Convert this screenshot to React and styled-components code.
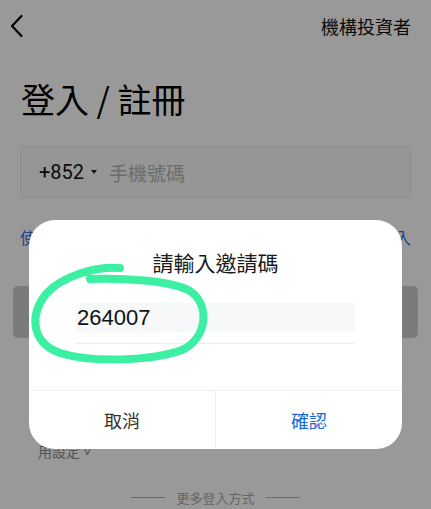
import React from 'react';
import styled, { createGlobalStyle } from 'styled-components';

const GlobalStyle = createGlobalStyle`
  html, body {
    margin: 0;
    padding: 0;
    background: #ffffff;
  }
  body {
    font-family: "Liberation Sans", "Noto Sans CJK TC", sans-serif;
    -webkit-font-smoothing: antialiased;
  }
`;

const Screen = styled.div`
  position: relative;
  width: 431px;
  height: 509px;
  overflow: hidden;
  background: #ffffff;
`;

const Header = styled.div`
  display: flex;
  align-items: center;
  justify-content: space-between;
  height: 52px;
  padding: 0 20px 0 9px;
`;

const BackIcon = styled.svg`
  width: 16px;
  height: 24px;
  display: block;
`;

const HeaderLink = styled.span`
  font-family: "Noto Sans CJK TC", sans-serif;
  font-size: 18px;
  color: #111;
  line-height: 1;
`;

const Title = styled.h1`
  margin: 24px 0 0 21px;
  font-family: "Noto Sans CJK TC", sans-serif;
  font-weight: 400;
  font-size: 34px;
  line-height: 46px;
  color: #000;
  white-space: pre;
`;

const PhoneBox = styled.div`
  display: flex;
  align-items: center;
  margin: 24px 20px 0 20px;
  height: 50px;
  border: 1px solid #e9e9e9;
  border-radius: 4px;
  background: #fbfbfb;
  padding-left: 18px;
`;

const AreaCode = styled.span`
  font-family: Roboto, "Liberation Sans", sans-serif;
  font-size: 20px;
  color: #111;
`;

const Caret = styled.span`
  width: 0;
  height: 0;
  margin: 0 12px 0 7px;
  border-left: 3px solid transparent;
  border-right: 3px solid transparent;
  border-top: 4px solid #222;
`;

const Placeholder = styled.span`
  font-family: "Noto Sans CJK TC", sans-serif;
  font-size: 19px;
  color: #b4b4b4;
`;

const LinkRow = styled.div`
  display: flex;
  justify-content: space-between;
  margin: 28px 20px 0 20px;
  font-family: "Noto Sans CJK TC", sans-serif;
  font-size: 16px;
  line-height: 22px;
  color: #3374e6;
`;

const SubmitButton = styled.div`
  margin: 38px 13px 0 13px;
  height: 52px;
  border-radius: 5px;
  background: #cdcdcd;
`;

const Agreement = styled.div`
  margin: 80px 0 0 38px;
  font-family: "Noto Sans CJK TC", sans-serif;
  font-size: 14px;
  line-height: 22px;
  color: #8e8e8e;
`;

const MoreLogin = styled.div`
  display: flex;
  align-items: center;
  justify-content: center;
  gap: 11px;
  margin-top: 26px;
  font-family: "Noto Sans CJK TC", sans-serif;
  font-size: 13px;
  line-height: 19px;
  color: #aaaaaa;
  &::before,
  &::after {
    content: "";
    width: 34px;
    height: 1px;
    background: #b5b5b5;
  }
`;

const Dim = styled.div`
  position: absolute;
  inset: 0;
  background: rgba(0, 0, 0, 0.4);
`;

const Dialog = styled.div`
  position: absolute;
  left: 29px;
  top: 220px;
  width: 373px;
  display: flex;
  flex-direction: column;
  background: #ffffff;
  border-radius: 26px;
  overflow: hidden;
`;

const DialogTitle = styled.div`
  padding-top: 30px;
  text-align: center;
  font-family: "Noto Sans CJK TC", sans-serif;
  font-size: 21px;
  line-height: 25px;
  color: #1a1a1a;
`;

const CodeField = styled.div`
  margin: 28px 47px 0 47px;
  padding-bottom: 11px;
  border-bottom: 1px solid #eeeeee;
`;

const CodeValue = styled.div`
  height: 29px;
  display: flex;
  align-items: center;
  padding-left: 1px;
  background: #f7f8fa;
  font-family: "Liberation Sans", sans-serif;
  font-size: 22px;
  color: #111;
`;

const Actions = styled.div`
  display: grid;
  grid-template-columns: 186px 1fr;
  margin-top: 46px;
  border-top: 1px solid #f0f0f0;
  height: 58px;
`;

const ActionButton = styled.div`
  display: flex;
  align-items: center;
  justify-content: center;
  font-family: "Noto Sans CJK TC", sans-serif;
  font-size: 18px;
  color: ${(p) => (p.$primary ? '#1469dc' : '#333333')};
  border-left: ${(p) => (p.$primary ? '1px solid #f0f0f0' : 'none')};
`;

const Scribble = styled.svg`
  position: absolute;
  left: 0;
  top: 0;
  width: 431px;
  height: 509px;
  pointer-events: none;
`;

export default function App() {
  return (
    <>
      <GlobalStyle />
      <Screen>
        <Header>
          <BackIcon viewBox="0 0 16 24">
            <path d="M12.5 2 L3 12 L12.5 22" fill="none" stroke="#000" strokeWidth="2.2" strokeLinecap="round" strokeLinejoin="round" />
          </BackIcon>
          <HeaderLink>機構投資者</HeaderLink>
        </Header>
        <Title>登入 / 註冊</Title>
        <PhoneBox>
          <AreaCode>+852</AreaCode>
          <Caret />
          <Placeholder>手機號碼</Placeholder>
        </PhoneBox>
        <LinkRow>
          <span>使用密碼登入</span>
          <span>驗證碼登入</span>
        </LinkRow>
        <SubmitButton />
        <Agreement>
          <div>我已閱讀並同意相關條款及私隱與使</div>
          <div>用設定 ˅</div>
        </Agreement>
        <MoreLogin>更多登入方式</MoreLogin>

        <Dim />

        <Dialog>
          <DialogTitle>請輸入邀請碼</DialogTitle>
          <CodeField>
            <CodeValue>264007</CodeValue>
          </CodeField>
          <Actions>
            <ActionButton>取消</ActionButton>
            <ActionButton $primary>確認</ActionButton>
          </Actions>
        </Dialog>

        <Scribble viewBox="0 0 431 509">
          <path
            d="M120 268 C 96 266, 62 276, 46 294 C 30 314, 30 342, 60 353 C 92 363, 152 361, 182 350 C 208 338, 210 304, 190 291 C 170 280, 122 278, 90 279"
            fill="none"
            stroke="#3cf0a3"
            strokeWidth="8"
            strokeLinecap="round"
            strokeLinejoin="round"
          />
        </Scribble>
      </Screen>
    </>
  );
}
